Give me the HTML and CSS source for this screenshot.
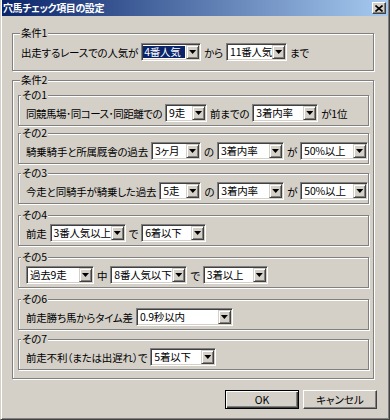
FILE: index.html
```html
<!DOCTYPE html>
<html lang="ja">
<head>
    <meta charset="UTF-8">
    <title>穴馬チェック項目の設定</title>
    <link rel="stylesheet" href="styles.css">
</head>
<body>
    <div class="window">
        <div class="titlebar">
            <span class="title">穴馬チェック項目の設定</span>
            <span class="close">
                <svg width="8" height="7" viewBox="0 0 8 7"><path d="M0.5 0.5L7.5 6.5M7.5 0.5L0.5 6.5" stroke="#000" stroke-width="1.6"/></svg>
            </span>
        </div>

        <div class="content">
            <fieldset class="group g1">
                <legend>条件1</legend>
                <div class="row">
                    <span>出走するレースでの人気が</span>
                    <span class="combo focus w60"><span class="val">4番人気</span><span class="drop"></span></span>
                    <span>から</span>
                    <span class="combo w61"><span class="val">11番人気</span><span class="drop"></span></span>
                    <span>まで</span>
                </div>
            </fieldset>

            <fieldset class="group g2">
                <legend>条件2</legend>

                <fieldset class="sub s1">
                    <legend>その1</legend>
                    <div class="row">
                        <span class="tight">同競馬場･同コース･同距離での</span>
                        <span class="combo w42"><span class="val">9走</span><span class="drop"></span></span>
                        <span>前までの</span>
                        <span class="combo w66"><span class="val">3着内率</span><span class="drop"></span></span>
                        <span>が1位</span>
                    </div>
                </fieldset>

                <fieldset class="sub s2">
                    <legend>その2</legend>
                    <div class="row">
                        <span>騎乗騎手と所属厩舎の過去</span>
                        <span class="combo w50"><span class="val">3ヶ月</span><span class="drop"></span></span>
                        <span>の</span>
                        <span class="combo w67"><span class="val">3着内率</span><span class="drop"></span></span>
                        <span>が</span>
                        <span class="combo w68"><span class="val">50%以上</span><span class="drop"></span></span>
                    </div>
                </fieldset>

                <fieldset class="sub s3">
                    <legend>その3</legend>
                    <div class="row">
                        <span>今走と同騎手が騎乗した過去</span>
                        <span class="combo w42"><span class="val">5走</span><span class="drop"></span></span>
                        <span>の</span>
                        <span class="combo w67"><span class="val">3着内率</span><span class="drop"></span></span>
                        <span>が</span>
                        <span class="combo w68"><span class="val">50%以上</span><span class="drop"></span></span>
                    </div>
                </fieldset>

                <fieldset class="sub s4">
                    <legend>その4</legend>
                    <div class="row">
                        <span>前走</span>
                        <span class="combo w76"><span class="val">3番人気以上</span><span class="drop"></span></span>
                        <span>で</span>
                        <span class="combo w65"><span class="val">6着以下</span><span class="drop"></span></span>
                    </div>
                </fieldset>

                <fieldset class="sub s5">
                    <legend>その5</legend>
                    <div class="row">
                        <span class="combo w68"><span class="val">過去9走</span><span class="drop"></span></span>
                        <span>中</span>
                        <span class="combo w77"><span class="val">8番人気以下</span><span class="drop"></span></span>
                        <span>で</span>
                        <span class="combo w65"><span class="val">3着以上</span><span class="drop"></span></span>
                    </div>
                </fieldset>

                <fieldset class="sub s6">
                    <legend>その6</legend>
                    <div class="row">
                        <span>前走勝ち馬からタイム差</span>
                        <span class="combo w97"><span class="val">0.9秒以内</span><span class="drop"></span></span>
                    </div>
                </fieldset>

                <fieldset class="sub s7">
                    <legend>その7</legend>
                    <div class="row">
                        <span>前走不利（または出遅れ）で</span>
                        <span class="combo w66"><span class="val">5着以下</span><span class="drop"></span></span>
                    </div>
                </fieldset>
            </fieldset>

            <div class="buttons">
                <button class="btn default">OK</button>
                <button class="btn">キャンセル</button>
            </div>
        </div>
    </div>
</body>
</html>
```

FILE: styles.css
```css
* {
    box-sizing: border-box;
}

body {
    margin: 0;
    background: #d4d0c8;
    font-family: "Noto Sans CJK JP", "Liberation Sans", sans-serif;
    font-size: 10.5px;
    font-feature-settings: "palt";
    letter-spacing: -0.2px;
    color: #000;
}

.window {
    width: 390px;
    height: 420px;
    border-left: 1px solid #d4d0c8;
    border-right: 1px solid #404040;
    border-bottom: 1px solid #404040;
    box-shadow: inset 1px 0 #fff, inset -1px -1px #808080;
    padding: 0 1px 1px 1px;
}

/* title bar */
.titlebar {
    height: 16px;
    background: linear-gradient(to right, #0a246a, #a6caf0);
    display: flex;
    align-items: center;
    justify-content: space-between;
    padding: 0 2px 0 1px;
}

.title {
    color: #fff;
    font-size: 10px;
    font-weight: bold;
    letter-spacing: -0.4px;
    line-height: 14px;
}

.close {
    width: 14px;
    height: 12px;
    background: #d4d0c8;
    border: 1px solid;
    border-color: #fff #404040 #404040 #fff;
    box-shadow: inset -1px -1px #808080;
    display: flex;
    align-items: center;
    justify-content: center;
}

.close svg {
    display: block;
}

.content {
    padding: 11px 14px 0 10px;
}

/* group boxes */
fieldset {
    margin: 0;
    min-inline-size: 0;
    border: 1px solid #808080;
    box-shadow: 1px 1px #fff, inset 1px 1px #fff;
}

legend {
    padding: 0 1px;
    line-height: 12px;
    background: #d4d0c8;
}

.g1 {
    padding: 4px 7px 9px 8px;
}

.g1 legend {
    margin-left: -1px;
}

.g2 {
    margin-top: 3px;
    padding: 3px 4px 8px 5px;
}

.g2 > legend {
    margin-left: 2px;
}

.sub {
    padding: 3px 4px 3px 7px;
}

.sub legend {
    margin-left: -5px;
}

.s2 { margin-top: 1px; }
.s3 { margin-top: 3px; }
.s4 { margin-top: 5px; }
.s5 { margin-top: 5px; }
.s6 { margin-top: 5px; }
.s7 { margin-top: 3px; }

.row {
    display: flex;
    align-items: center;
    gap: 3px;
    height: 18px;
    white-space: nowrap;
}

.tight {
    letter-spacing: -0.5px;
}

/* combo boxes */
.combo {
    flex: none;
    display: flex;
    height: 18px;
    background: #fff;
    border: 1px solid;
    border-color: #808080 #fff #fff #808080;
    box-shadow: inset 1px 1px #404040, inset -1px -1px #d4d0c8;
    padding: 1px;
}

.combo .val {
    flex: 1;
    padding-left: 2px;
    line-height: 14px;
}

.combo.focus .val {
    margin: 1px 1px 1px 0;
    padding-left: 1px;
    line-height: 12px;
    background: #0a246a;
    color: #fff;
}

.combo .drop {
    flex: none;
    width: 13px;
    height: 14px;
    background: #d4d0c8;
    border: 1px solid;
    border-color: #d4d0c8 #404040 #404040 #d4d0c8;
    box-shadow: inset 1px 1px #fff, inset -1px -1px #808080;
    display: flex;
    align-items: center;
    justify-content: center;
}

.combo .drop::after {
    content: '';
    width: 7px;
    height: 4px;
    background: #000;
    clip-path: polygon(0 0, 100% 0, 50% 100%);
}

.w42 { width: 42px; }
.w50 { width: 50px; }
.w60 { width: 60px; }
.w61 { width: 61px; }
.w65 { width: 65px; }
.w66 { width: 66px; }
.w67 { width: 67px; }
.w68 { width: 68px; }
.w76 { width: 76px; }
.w77 { width: 77px; }
.w97 { width: 97px; }

/* buttons */
.buttons {
    display: flex;
    justify-content: flex-end;
    gap: 4px;
    margin: 11px -3px 0 0;
}

.btn {
    width: 74px;
    height: 19px;
    padding: 0;
    font: inherit;
    line-height: 15px;
    color: #000;
    background: #d4d0c8;
    border: 1px solid;
    border-color: #fff #404040 #404040 #fff;
    box-shadow: inset -1px -1px #808080;
}

.btn.default {
    border-color: #000;
    box-shadow: inset 1px 1px #fff, inset -1px -1px #404040, inset -2px -2px #808080;
}
```
